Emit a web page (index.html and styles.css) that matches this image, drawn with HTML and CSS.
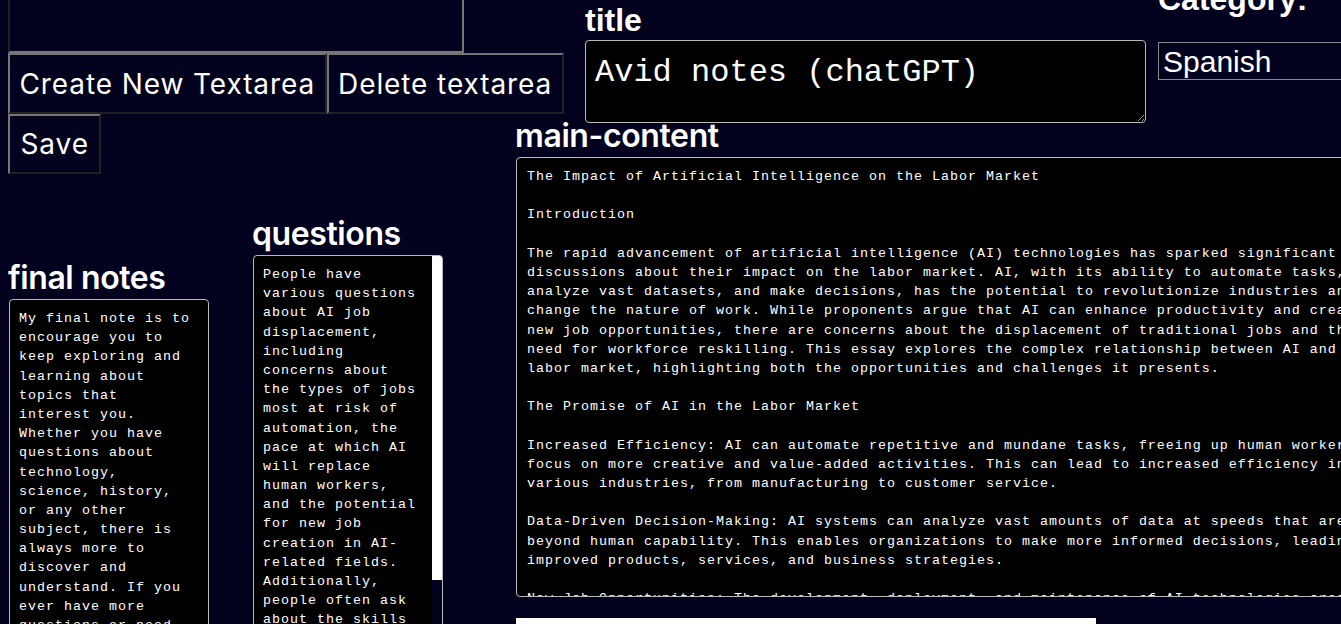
FILE: index.html
```html
<!DOCTYPE html>
<html lang="en">
<head>
<meta charset="utf-8">
<title>Notes</title>
<link rel="stylesheet" href="styles.css">
</head>
<body>
<div class="page">
  <div class="left">
    <textarea class="topbox"></textarea>
    <div class="btn-row">
      <button class="btn">Create New Textarea</button>
      <button class="btn">Delete textarea</button>
    </div>
    <button class="btn save">Save</button>
    <div class="notes">
      <div class="field final">
        <h2 class="heading">final notes</h2>
        <textarea class="box final-box">My final note is to encourage you to keep exploring and learning about topics that interest you. Whether you have questions about technology, science, history, or any other subject, there is always more to discover and understand. If you ever have more questions or need assistance, feel free to reach out. Happy learning!</textarea>
      </div>
      <div class="field questions">
        <h2 class="heading">questions</h2>
        <textarea class="box questions-box">People have various questions about AI job displacement, including concerns about the types of jobs most at risk of automation, the pace at which AI will replace human workers, and the potential for new job creation in AI-related fields. Additionally, people often ask about the skills that will be most valuable in an AI-driven economy and how to prepare for the future of work.</textarea>
      </div>
    </div>
  </div>
  <div class="right">
    <div class="right-top">
      <div class="title-field">
        <h1 class="label">title</h1>
        <textarea class="box title-box">Avid notes (chatGPT)</textarea>
      </div>
      <div class="category-field">
        <h1 class="label">Category:</h1>
        <select class="select">
          <option>Spanish</option>
          <option>English</option>
        </select>
      </div>
    </div>
    <div class="main-field">
      <h2 class="heading">main-content</h2>
      <textarea class="box main-box">The Impact of Artificial Intelligence on the Labor Market

Introduction

The rapid advancement of artificial intelligence (AI) technologies has sparked significant discussions about their impact on the labor market. AI, with its ability to automate tasks, analyze vast datasets, and make decisions, has the potential to revolutionize industries and change the nature of work. While proponents argue that AI can enhance productivity and create new job opportunities, there are concerns about the displacement of traditional jobs and the need for workforce reskilling. This essay explores the complex relationship between AI and the labor market, highlighting both the opportunities and challenges it presents.

The Promise of AI in the Labor Market

Increased Efficiency: AI can automate repetitive and mundane tasks, freeing up human workers to focus on more creative and value-added activities. This can lead to increased efficiency in various industries, from manufacturing to customer service.

Data-Driven Decision-Making: AI systems can analyze vast amounts of data at speeds that are beyond human capability. This enables organizations to make more informed decisions, leading to improved products, services, and business strategies.

New Job Opportunities: The development, deployment, and maintenance of AI technologies create new job roles, such as data scientists, machine learning engineers, and AI ethicists.</textarea>
      <div class="white-bar"></div>
    </div>
  </div>
</div>
</body>
</html>
```

FILE: styles.css
```css
html, body {
  margin: 0;
  padding: 0;
  overflow: hidden;
  background: #02021e;
  height: 100%;
}

.page {
  display: flex;
  align-items: flex-start;
  margin-top: -30px;
  padding-left: 8px;
}

.left {
  flex: none;
  width: 508px;
  padding-top: 8px;
  display: flex;
  flex-direction: column;
  align-items: flex-start;
}

.topbox {
  display: block;
  box-sizing: border-box;
  width: 456px;
  height: 75px;
  margin: 0;
  background: #02021e;
  border: 2px inset #767676;
  resize: none;
  outline: none;
}

.btn-row {
  display: flex;
  flex-wrap: nowrap;
}

.btn {
  flex: none;
  box-sizing: border-box;
  height: 61px;
  margin: 0;
  padding: 0 9.5px;
  background: #02021e;
  color: #ffffff;
  border: 2px outset #767676;
  font-family: "Inter", "Noto Sans", sans-serif;
  font-size: 28px;
  font-weight: 400;
  letter-spacing: 0.9px;
  white-space: nowrap;
}

.btn.save {
  height: 60px;
  padding: 0 10.5px;
}

.notes {
  display: flex;
  align-items: flex-start;
  margin-top: 47px;
}

.field {
  display: flex;
  flex-direction: column;
  align-items: flex-start;
}

.final {
  margin-top: 44px;
  margin-left: 1px;
}

.questions {
  margin-left: 44px;
}

.heading {
  margin: 0 0 8px -1px;
  color: #ffffff;
  font-family: "Inter", "Noto Sans", sans-serif;
  font-size: 32px;
  font-weight: 600;
  line-height: 26px;
  letter-spacing: -0.4px;
}

.box {
  display: block;
  margin: 0;
  background: #000000;
  color: #ffffff;
  border: 1px solid #b9b9b9;
  border-radius: 4px;
  padding: 9px 10px;
  font-family: "Liberation Mono", "DejaVu Sans Mono", monospace;
  font-size: 13.333px;
  line-height: 1.44;
  letter-spacing: 1px;
  outline: none;
  overflow: hidden;
}

.final-box {
  box-sizing: border-box;
  width: 200px;
  height: 420px;
  padding-left: 9px;
}

.questions-box {
  box-sizing: border-box;
  width: 190px;
  height: 411px;
  padding-left: 9px;
  padding-right: 20px;
  background:
    linear-gradient(#ffffff, #ffffff) right top / 10px 324px no-repeat,
    linear-gradient(#02021e, #02021e) right top / 10px 100% no-repeat,
    #000000;
}

.right {
  flex: none;
  width: 900px;
  display: flex;
  flex-direction: column;
  align-items: flex-start;
}

.right-top {
  display: flex;
  align-items: flex-start;
}

.title-field {
  margin-left: 69px;
  padding-top: 32px;
  width: 561px;
}

.label {
  margin: 0;
  color: #ffffff;
  font-family: "Liberation Sans", Arial, sans-serif;
  font-size: 32px;
  font-weight: 700;
  line-height: 37px;
}

.title-box {
  box-sizing: border-box;
  width: 561px;
  height: 83px;
  margin-top: 1px;
  padding: 9px;
  font-size: 32px;
  letter-spacing: 0;
}

.category-field {
  margin-left: 12px;
  padding-top: 11px;
}

.select {
  display: block;
  box-sizing: border-box;
  width: 250px;
  height: 38px;
  margin-top: 24px;
  padding: 0 4px;
  background: #02021e;
  color: #ffffff;
  border: 1px solid #8a8a8a;
  border-radius: 0;
  font-family: "Liberation Sans", Arial, sans-serif;
  font-size: 30px;
  appearance: none;
  -webkit-appearance: none;
  outline: none;
}

.main-field {
  display: flex;
  flex-direction: column;
  align-items: flex-start;
}

.main-box {
  width: 865px;
  height: 420px;
  resize: both;
}

.white-bar {
  width: 580px;
  height: 20px;
  margin-top: 21px;
  background: #ffffff;
}
```
